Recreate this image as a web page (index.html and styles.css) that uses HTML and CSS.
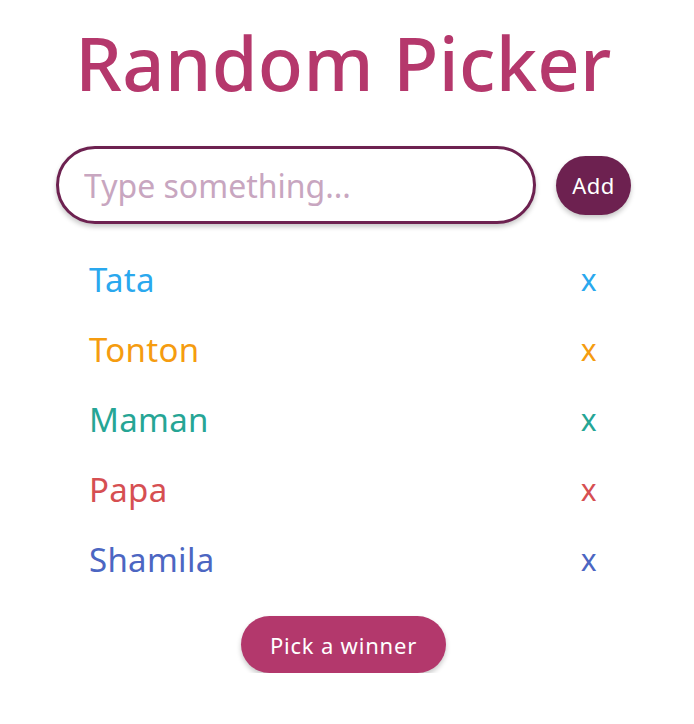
FILE: index.html
```html
<!DOCTYPE html>
<html lang="en">
<head>
<meta charset="utf-8">
<title>Random Picker</title>
<link rel="stylesheet" href="styles.css">
</head>
<body>
<main class="app">
  <h1 class="title">Random Picker</h1>
  <form class="add-form">
    <input class="add-input" type="text" placeholder="Type something...">
    <button class="add-btn" type="button">Add</button>
  </form>
  <ul class="list">
    <li class="item c-blue"><span class="name">Tata</span><span class="del">x</span></li>
    <li class="item c-orange"><span class="name">Tonton</span><span class="del">x</span></li>
    <li class="item c-teal"><span class="name">Maman</span><span class="del">x</span></li>
    <li class="item c-red"><span class="name">Papa</span><span class="del">x</span></li>
    <li class="item c-indigo"><span class="name">Shamila</span><span class="del">x</span></li>
  </ul>
  <div class="actions">
    <button class="pick-btn" type="button">Pick a winner</button>
  </div>
</main>
</body>
</html>
```
FILE: styles.css
```css
* { box-sizing: border-box; }
html, body { margin: 0; padding: 0; background: #ffffff; }
body {
  font-family: "Noto Sans", "DejaVu Sans", sans-serif;
}
.app {
  width: 575px;
  margin-left: 56px;
  display: flex;
  flex-direction: column;
}
.title {
  margin: 0;
  padding-top: 18px;
  height: 118px;
  text-align: center;
  font-size: 74px;
  font-weight: 500;
  line-height: 90px;
  color: #b5386c;
  letter-spacing: 0.3px;
}
.add-form {
  margin: 28px 0 0;
  display: flex;
  align-items: center;
  gap: 20px;
}
.add-input {
  width: 480px;
  height: 78px;
  border: 3px solid #6d2150;
  border-radius: 40px;
  padding: 0 0 0 25px;
  font-family: inherit;
  font-size: 32px;
  color: #6d2150;
  outline: none;
  box-shadow: 0 3px 5px rgba(0,0,0,0.22);
}
.add-input::placeholder { color: #c8a6c0; }
.add-btn {
  width: 75px;
  height: 59px;
  border: none;
  border-radius: 30px;
  background: #6d2150;
  color: #ffffff;
  font-family: inherit;
  font-size: 22px;
  font-weight: 400;
  letter-spacing: 0.5px;
  padding: 0;
  box-shadow: 0 3px 5px rgba(0,0,0,0.22);
}
.list {
  list-style: none;
  margin: 20px 0 0;
  padding: 0 34px 0 33px;
}
.item {
  height: 70px;
  display: flex;
  align-items: center;
  justify-content: space-between;
  font-size: 33px;
  letter-spacing: 0.3px;
}
.del { font-size: 30px; }
.c-blue { color: #2aa8ee; }
.c-orange { color: #f59c10; }
.c-teal { color: #26a595; }
.c-red { color: #d64f52; }
.c-indigo { color: #4c66c2; }
.actions {
  margin-top: 22px;
  display: flex;
  justify-content: center;
}
.pick-btn {
  width: 205px;
  height: 57px;
  border: none;
  border-radius: 29px;
  background: #b3386c;
  color: #ffffff;
  font-family: inherit;
  font-size: 22px;
  letter-spacing: 0.8px;
  padding: 0;
  box-shadow: 0 3px 5px rgba(0,0,0,0.22);
}
```
